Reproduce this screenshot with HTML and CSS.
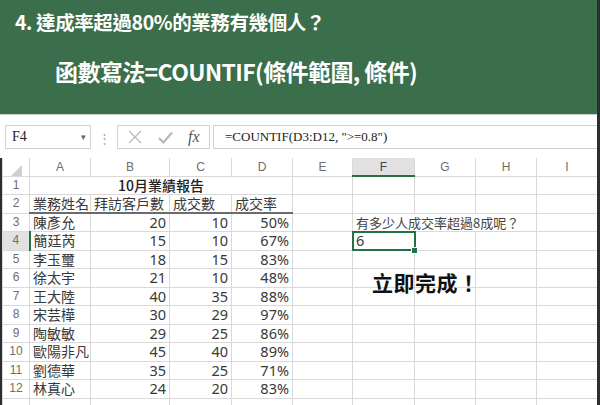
FILE: index.html
```html
<!DOCTYPE html>
<html lang="zh-Hant">
<head>
  <meta charset="UTF-8" />
  <meta name="viewport" content="width=device-width, initial-scale=1" />
  <title>COUNTIF 達成率</title>
  <link rel="stylesheet" href="styles.css">
</head>
<body>
  <div class="frame">
    <header class="banner">
      <h1 class="question">4. 達成率超過80%的業務有幾個人？</h1>
      <p class="syntax">函數寫法=COUNTIF(條件範圍, 條件)</p>
    </header>

    <div class="formula-bar">
      <div class="name-box">F4<span class="caret">&#9662;</span></div>
      <span class="grip">&#8942;</span>
      <div class="fx-box">
        <svg class="fx-icon" width="14" height="14" viewBox="0 0 14 14"><path d="M1 1 L13 13 M13 1 L1 13" stroke="#b9b9b9" stroke-width="1.3" fill="none"/></svg>
        <svg class="fx-icon" width="15" height="13" viewBox="0 0 15 13"><path d="M1 7 L5.5 11.5 L14 1.5" stroke="#b9b9b9" stroke-width="2.2" fill="none"/></svg>
        <span class="fx">fx</span>
      </div>
      <div class="formula">=COUNTIF(D3:D12, "&gt;=0.8")</div>
    </div>

    <div class="sheet">
      <table class="grid">
        <colgroup>
          <col class="c-rh"><col class="c-a"><col class="c-b"><col class="c-c"><col class="c-d">
          <col class="c-e"><col class="c-f"><col class="c-g"><col class="c-h"><col class="c-i">
        </colgroup>
        <tr class="col-heads">
          <th class="corner"><svg width="11" height="11" viewBox="0 0 11 11"><path d="M11 0 L11 11 L0 11 Z" fill="#cfcfcf"/></svg></th>
          <th>A</th><th>B</th><th>C</th><th>D</th><th>E</th><th class="active">F</th><th>G</th><th>H</th><th>I</th>
        </tr>
        <tr>
          <td class="rh">1</td><td colspan="4" class="title">10月業績報告</td><td></td><td></td><td></td><td></td><td></td>
        </tr>
        <tr class="heading-row">
          <td class="rh">2</td><td class="hd">業務姓名</td><td class="hd">拜訪客戶數</td><td class="hd">成交數</td><td class="hd">成交率</td><td></td><td></td><td></td><td></td><td></td>
        </tr>
        <tr>
          <td class="rh">3</td><td>陳彥允</td><td class="num">20</td><td class="num">10</td><td class="num">50%</td><td></td><td colspan="3" class="note">有多少人成交率超過8成呢？</td><td></td>
        </tr>
        <tr>
          <td class="rh active">4</td><td>簡廷芮</td><td class="num">15</td><td class="num">10</td><td class="num">67%</td><td></td><td class="sel">6</td><td></td><td></td><td></td>
        </tr>
        <tr>
          <td class="rh">5</td><td>李玉璽</td><td class="num">18</td><td class="num">15</td><td class="num">83%</td><td></td><td></td><td></td><td></td><td></td>
        </tr>
        <tr>
          <td class="rh">6</td><td>徐太宇</td><td class="num">21</td><td class="num">10</td><td class="num">48%</td><td></td><td></td><td></td><td></td><td></td>
        </tr>
        <tr>
          <td class="rh">7</td><td>王大陸</td><td class="num">40</td><td class="num">35</td><td class="num">88%</td><td></td><td></td><td></td><td></td><td></td>
        </tr>
        <tr>
          <td class="rh">8</td><td>宋芸樺</td><td class="num">30</td><td class="num">29</td><td class="num">97%</td><td></td><td></td><td></td><td></td><td></td>
        </tr>
        <tr>
          <td class="rh">9</td><td>陶敏敏</td><td class="num">29</td><td class="num">25</td><td class="num">86%</td><td></td><td></td><td></td><td></td><td></td>
        </tr>
        <tr>
          <td class="rh">10</td><td>歐陽非凡</td><td class="num">45</td><td class="num">40</td><td class="num">89%</td><td></td><td></td><td></td><td></td><td></td>
        </tr>
        <tr>
          <td class="rh">11</td><td>劉德華</td><td class="num">35</td><td class="num">25</td><td class="num">71%</td><td></td><td></td><td></td><td></td><td></td>
        </tr>
        <tr>
          <td class="rh">12</td><td>林真心</td><td class="num">24</td><td class="num">20</td><td class="num">83%</td><td></td><td></td><td></td><td></td><td></td>
        </tr>
        <tr>
          <td class="rh"></td><td></td><td></td><td></td><td></td><td></td><td></td><td></td><td></td><td></td>
        </tr>
      </table>

      <!-- annotation written over the grid -->
      <div class="callout">立即完成！</div>
    </div>
  </div>
</body>
</html>
```

FILE: styles.css
```css
:root {
  --green-banner: #3b6e4a;
  --excel-green: #217346;
  --grid-line: #d9d9d9;
  --box-line: #d2d2d2;
  --head-text: #6e6e6e;
  --cell-text: #383838;
  --frame-dark: #2e2e2e;
}

* {
  box-sizing: border-box;
}

body {
  margin: 0;
  width: 600px;
  height: 405px;
  overflow: hidden;
  background: #fff;
  font-family: "Noto Sans CJK TC", "Noto Sans", sans-serif;
}

.frame {
  width: 600px;
  height: 405px;
  border-right: 3px solid var(--frame-dark);
  overflow: hidden;
}

/* Green title banner */
.banner {
  height: 115px;
  background: var(--green-banner);
  border-bottom: 1px solid #cfcfcf;
  color: #fff;
  padding-top: 10px;
}

.question {
  margin: 0;
  padding-left: 15px;
  font-size: 19.5px;
  line-height: 24px;
  font-weight: 700;
  letter-spacing: -0.4px;
}

.syntax {
  margin: 22px 0 0;
  padding-left: 55px;
  font-size: 23px;
  line-height: 30px;
  font-weight: 700;
  letter-spacing: -0.6px;
}

/* Formula bar */
.formula-bar {
  display: flex;
  align-items: center;
  height: 43px;
  padding: 10px 0 9px 5px;
  background: #fff;
}

.name-box {
  position: relative;
  width: 86px;
  height: 24px;
  border: 1px solid var(--box-line);
  padding-left: 6px;
  font-family: "Liberation Serif", serif;
  font-size: 14px;
  line-height: 22px;
  color: #222;
}

.caret {
  position: absolute;
  right: 4px;
  top: 0;
  font-size: 9px;
  color: #666;
}

.grip {
  width: 26px;
  text-align: center;
  color: #a8a8a8;
  font-size: 13px;
}

.fx-box {
  display: flex;
  align-items: center;
  gap: 16px;
  width: 93px;
  height: 24px;
  border: 1px solid var(--box-line);
  padding-left: 10px;
}

.fx {
  font-family: "Liberation Serif", serif;
  font-style: italic;
  font-size: 16px;
  color: #555;
  margin-left: -1px;
}

.formula {
  flex: 1;
  height: 24px;
  margin-left: 3px;
  border: 1px solid var(--box-line);
  border-right: none;
  padding-left: 11px;
  font-family: "Liberation Serif", serif;
  font-size: 13px;
  line-height: 22px;
  color: #222;
  white-space: nowrap;
}

/* Worksheet grid */
.sheet {
  position: relative;
  border-left: 2px solid var(--frame-dark);
}

.grid {
  table-layout: fixed;
  border-collapse: collapse;
  width: 595px;
}

.c-rh { width: 27px; }
.c-a { width: 61px; }
.c-b { width: 79px; }
.c-c { width: 62px; }
.c-d { width: 61px; }
.c-e { width: 60px; }
.c-f { width: 62px; }
.c-g { width: 61px; }
.c-h { width: 61px; }
.c-i { width: 61px; }

.grid th,
.grid td {
  border: 1px solid var(--grid-line);
  padding: 0 3px;
  white-space: nowrap;
  overflow: hidden;
}

.grid td {
  height: 18.5px;
  font-size: 14px;
  line-height: 17px;
  color: var(--cell-text);
}

.col-heads th {
  height: 18px;
  border-top: none;
  font-family: "Liberation Sans", sans-serif;
  font-weight: 400;
  font-size: 12px;
  color: var(--head-text);
  text-align: center;
}

.col-heads th.active {
  background: #e1e1e1;
  border-bottom: 2px solid var(--excel-green);
  color: #444;
}

.corner {
  text-align: right;
  vertical-align: bottom;
  padding: 0 2px 2px 0;
  line-height: 0;
}

.grid td.rh {
  text-align: center;
  font-family: "Liberation Sans", sans-serif;
  font-size: 12px;
  color: var(--head-text);
  padding: 0;
}

.grid td.rh.active {
  background: #e1e1e1;
  border-right: 2px solid var(--excel-green);
}

.grid td.title {
  text-align: center;
  font-weight: 500;
  color: #222;
}

.heading-row td.hd {
  border-bottom: 2px solid #6b6b6b;
}

.grid td.num {
  text-align: right;
  font-family: "Noto Sans", sans-serif;
  font-size: 14.5px;
}

.grid td.note {
  font-size: 13px;
  color: #444;
}

.grid td.sel {
  position: relative;
  overflow: visible;
  outline: 2px solid var(--excel-green);
  outline-offset: -1px;
  font-family: "Noto Sans", sans-serif;
  font-size: 14.5px;
}

.grid td.sel::after {
  content: "";
  position: absolute;
  right: -4px;
  bottom: -4px;
  width: 5px;
  height: 5px;
  background: var(--excel-green);
  border: 1px solid #fff;
}

.callout {
  position: absolute;
  left: 370px;
  top: 109px;
  font-size: 21px;
  font-weight: 700;
  color: #111;
  letter-spacing: 0.5px;
}
```
